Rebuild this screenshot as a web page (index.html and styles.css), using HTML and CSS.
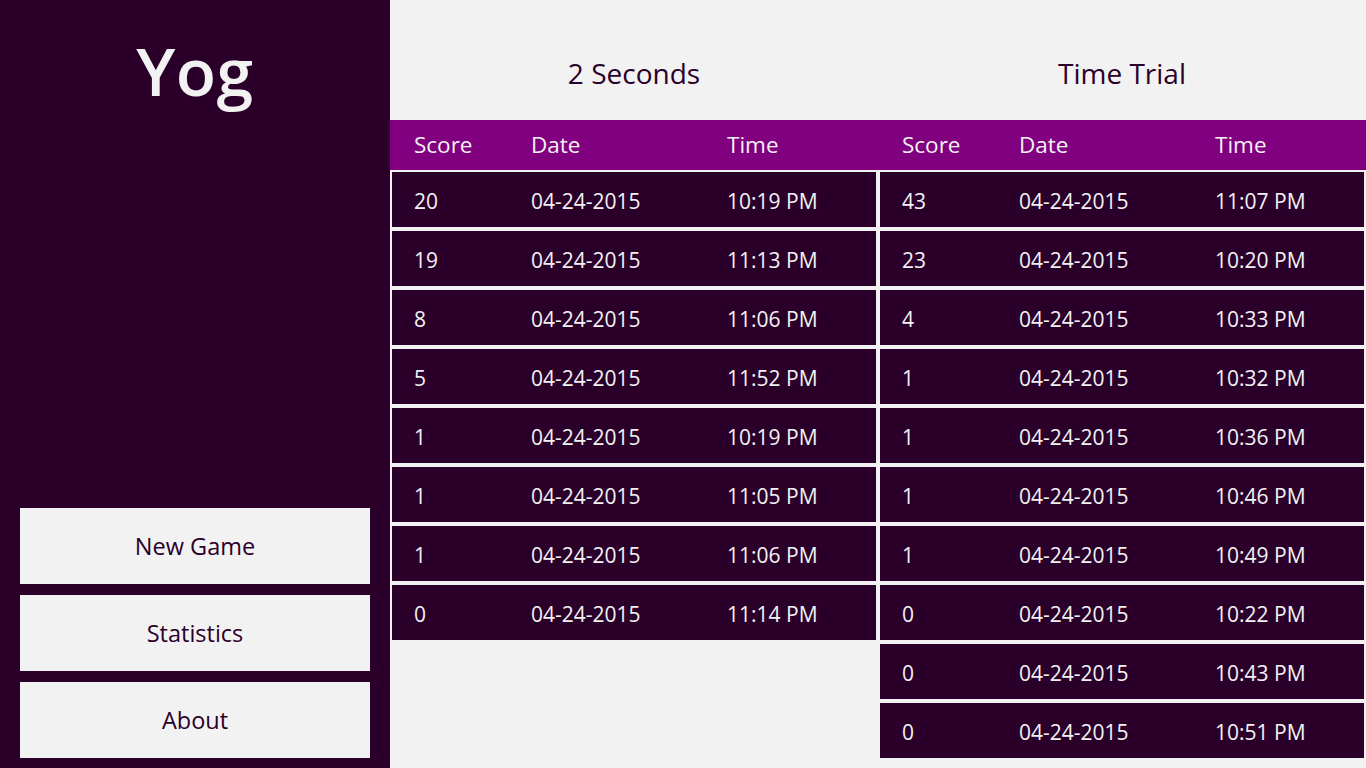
FILE: index.html
```html
<!DOCTYPE html>
<html>
<head>
<meta charset="utf-8">
<link rel="stylesheet" href="styles.css">
</head>
<body>
<aside class="sidebar">
  <h1 class="app-title">Yog</h1>
  <nav class="menu">
    <button class="menu-btn">New Game</button>
    <button class="menu-btn">Statistics</button>
    <button class="menu-btn">About</button>
  </nav>
</aside>
<main class="boards">
  <section class="board">
    <h2 class="board-title">2 Seconds</h2>
    <div class="row head"><span>Score</span><span>Date</span><span>Time</span></div>
    <div class="row"><span>20</span><span>04-24-2015</span><span>10:19 PM</span></div>
    <div class="row"><span>19</span><span>04-24-2015</span><span>11:13 PM</span></div>
    <div class="row"><span>8</span><span>04-24-2015</span><span>11:06 PM</span></div>
    <div class="row"><span>5</span><span>04-24-2015</span><span>11:52 PM</span></div>
    <div class="row"><span>1</span><span>04-24-2015</span><span>10:19 PM</span></div>
    <div class="row"><span>1</span><span>04-24-2015</span><span>11:05 PM</span></div>
    <div class="row"><span>1</span><span>04-24-2015</span><span>11:06 PM</span></div>
    <div class="row"><span>0</span><span>04-24-2015</span><span>11:14 PM</span></div>
  </section>
  <section class="board">
    <h2 class="board-title">Time Trial</h2>
    <div class="row head"><span>Score</span><span>Date</span><span>Time</span></div>
    <div class="row"><span>43</span><span>04-24-2015</span><span>11:07 PM</span></div>
    <div class="row"><span>23</span><span>04-24-2015</span><span>10:20 PM</span></div>
    <div class="row"><span>4</span><span>04-24-2015</span><span>10:33 PM</span></div>
    <div class="row"><span>1</span><span>04-24-2015</span><span>10:32 PM</span></div>
    <div class="row"><span>1</span><span>04-24-2015</span><span>10:36 PM</span></div>
    <div class="row"><span>1</span><span>04-24-2015</span><span>10:46 PM</span></div>
    <div class="row"><span>1</span><span>04-24-2015</span><span>10:49 PM</span></div>
    <div class="row"><span>0</span><span>04-24-2015</span><span>10:22 PM</span></div>
    <div class="row"><span>0</span><span>04-24-2015</span><span>10:43 PM</span></div>
    <div class="row"><span>0</span><span>04-24-2015</span><span>10:51 PM</span></div>
  </section>
</main>
</body>
</html>
```
FILE: styles.css
```css
* { box-sizing: border-box; }
html, body { margin: 0; padding: 0; }
body {
  width: 1366px;
  height: 768px;
  overflow: hidden;
  display: flex;
  font-family: "Open Sans", "Noto Sans", sans-serif;
  background: #f2f2f2;
}
.sidebar {
  width: 390px;
  flex: none;
  background: #2a002b;
  display: flex;
  flex-direction: column;
  justify-content: space-between;
  padding: 0 20px 10px;
}
.app-title {
  margin: 0;
  padding-top: 30px;
  text-align: center;
  color: #f2f2f2;
  font-size: 66px;
  font-weight: 600;
  line-height: 80px;
  letter-spacing: 0.5px;
}
.menu {
  display: flex;
  flex-direction: column;
  gap: 11px;
}
.menu-btn {
  height: 76px;
  border: none;
  background: #f2f2f2;
  color: #2a002b;
  font-family: inherit;
  font-size: 23.5px;
  padding: 0;
}
.boards {
  flex: 1;
  display: grid;
  grid-template-columns: 1fr 1fr;
  align-items: start;
}
.board {
  display: flex;
  flex-direction: column;
}
.board-title {
  margin: 0;
  height: 120px;
  padding-top: 26px;
  display: flex;
  align-items: center;
  justify-content: center;
  font-size: 28px;
  font-weight: 400;
  color: #2a002b;
}
.row {
  display: grid;
  grid-template-columns: 117px 196px 1fr;
  align-items: center;
  height: 55px;
  margin: 2px;
  padding-left: 22px;
  background: #2a002b;
  color: #f2f2f2;
  font-size: 21px;
  padding-top: 2px;
}
.row.head {
  height: 50px;
  margin: 0;
  padding-left: 24px;
  padding-top: 0;
  padding-bottom: 2px;
  background: #800080;
  font-size: 22.5px;
}
```
